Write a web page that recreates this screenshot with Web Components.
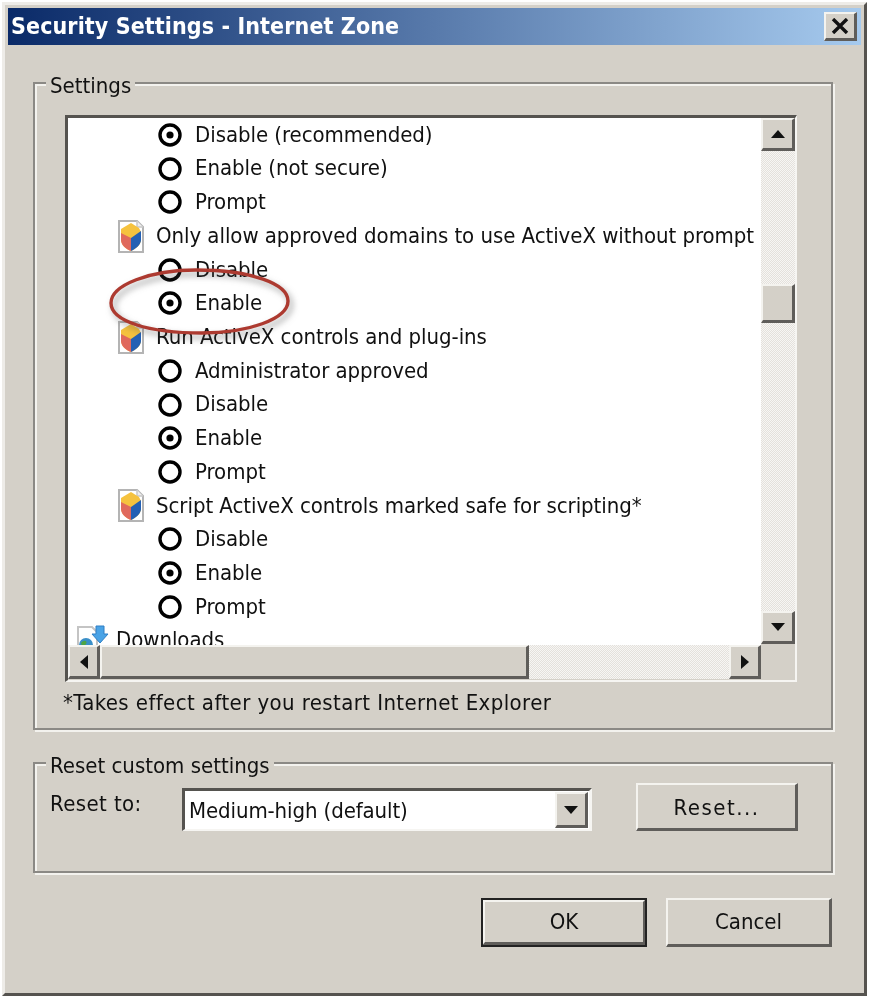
<!DOCTYPE html>
<html lang="en">
<head>
<meta charset="utf-8">
<title>Security Settings - Internet Zone</title>
<style>
html,body{margin:0;padding:0;background:#fff}
body{font:22px/1.2 "DejaVu Sans Condensed","DejaVu Sans",sans-serif;color:#111}
</style>
</head>
<body>
<x-window>
  <x-titlebar slot="title">Security Settings - Internet Zone</x-titlebar>

  <x-group label="Settings" style="--h:648px">
    <x-listbox>
      <x-opt checked>Disable (recommended)</x-opt>
      <x-opt>Enable (not secure)</x-opt>
      <x-opt>Prompt</x-opt>
      <x-head icon="shield">Only allow approved domains to use ActiveX without prompt</x-head>
      <x-opt>Disable</x-opt>
      <x-opt checked>Enable</x-opt>
      <x-head icon="shield">Run ActiveX controls and plug-ins</x-head>
      <x-opt>Administrator approved</x-opt>
      <x-opt>Disable</x-opt>
      <x-opt checked>Enable</x-opt>
      <x-opt>Prompt</x-opt>
      <x-head icon="shield">Script ActiveX controls marked safe for scripting*</x-head>
      <x-opt>Disable</x-opt>
      <x-opt checked>Enable</x-opt>
      <x-opt>Prompt</x-opt>
      <x-head icon="download">Downloads</x-head>
      <x-callout slot="over"></x-callout>
    </x-listbox>
    <x-note>*Takes effect after you restart Internet Explorer</x-note>
  </x-group>

  <x-group label="Reset custom settings" style="--h:111px;--mt:32px">
    <x-resetrow>
      <span slot="label">Reset to:</span>
      <x-combo slot="combo">Medium-high (default)</x-combo>
      <x-btn slot="button" style="--w:162px;--bh:48px;letter-spacing:1.5px;padding-top:3px">Reset...</x-btn>
    </x-resetrow>
  </x-group>

  <x-actions>
    <x-btn default style="--w:166px;--bh:49px">OK</x-btn>
    <x-btn style="--w:166px;--bh:49px">Cancel</x-btn>
  </x-actions>
</x-window>

<script>
function def(name, css, html){
  customElements.define(name, class extends HTMLElement{
    constructor(){
      super();
      const r=this.attachShadow({mode:'open'});
      r.innerHTML='<style>'+css+'</style>'+(typeof html==='function'?html(this):html);
    }
  });
}
const BEVEL='background:#d4d0c8;box-sizing:border-box;border-style:solid;border-width:2px 3px 3px 2px;border-color:#f4f3ef #5f5d5a #5f5d5a #f4f3ef;';
const DITHER='background-color:#efedea;background-image:conic-gradient(#e4e1dc 25%,#f7f6f4 0 50%,#e4e1dc 0 75%,#f7f6f4 0);background-size:2px 2px;';

def('x-window',`
  :host{display:block;width:869px;height:998px;box-sizing:border-box;filter:blur(.6px);
    padding:2px 2px 2px 2px}
  .frame{box-sizing:border-box;height:100%;background:#d4d0c8;
    border-style:solid;border-color:#eeece8 #55534f #55534f #eeece8;border-width:3px 3px 3px 3px;
    padding:3px 3px 0 3px;display:flex;flex-direction:column}
  .body{padding:0 0 0 25px;flex:1;display:flex;flex-direction:column}
`,`<div class="frame"><slot name="title"></slot><div class="body"><slot></slot></div></div>`);

def('x-titlebar',`
  :host{display:flex;align-items:center;justify-content:space-between;flex:none;height:37px;
    width:853px;box-sizing:border-box;padding:0 4px 0 3px;
    background:linear-gradient(90deg,#0a2a68,#a6caee);color:#fff;
    font:bold 23px/1 "DejaVu Sans Condensed","DejaVu Sans",sans-serif;letter-spacing:.1px}
  .x{width:33px;height:29px;display:flex;align-items:center;justify-content:center;${BEVEL}}
`,`<span><slot></slot></span><span class="x"><svg width="18" height="16" viewBox="0 0 18 16"><path d="M2 1 L16 15 M16 1 L2 15" stroke="#111" stroke-width="3.4" fill="none"/></svg></span>`);

def('x-group',`
  :host{display:block;box-sizing:border-box;width:800px;height:var(--h);margin:var(--mt,37px) 0 0 0;
    border:2px solid #8b8985;box-shadow:inset 2px 2px 0 #f3f2ee,2px 2px 0 #f3f2ee;position:relative}
  .lg{display:block;width:fit-content;margin:-10px 0 0 11px;padding:0 4px;background:#d4d0c8;height:24px;line-height:24px;white-space:nowrap}
`,h=>`<span class="lg">${h.getAttribute('label')}</span><slot></slot>`);

def('x-listbox',`
  :host{display:block;box-sizing:border-box;width:732px;height:567px;margin:17px 0 0 30px;
    border-style:solid;border-color:#55534f #f6f5f2 #f6f5f2 #55534f;border-width:3px 2px 2px 3px;background:#d4d0c8;position:relative;letter-spacing:-.05px}
  .g{display:grid;grid-template-columns:693px 34px;grid-template-rows:527px 35px;height:100%}
  .list{background:#fff;overflow:hidden;position:relative}
  .v,.h{display:flex}
  .v{flex-direction:column;height:526px}
  .h{height:34px}
  .btn{${BEVEL}flex:none;display:flex;align-items:center;justify-content:center}
  .v .btn{height:33px;width:34px}
  .h .btn{width:32px;height:34px}
  .track{${DITHER}flex:none}
  .v .track{width:34px}
  .h .track{height:34px}
  .corner{background:#d4d0c8}
`,`<div class="g">
    <div class="list"><div><slot></slot></div><slot name="over"></slot></div>
    <div class="v">
      <div class="btn"><svg width="14" height="8"><path d="M7 0 L14 8 H0Z" fill="#111"/></svg></div>
      <div class="track" style="height:133px"></div>
      <div class="btn" style="height:39px"></div>
      <div class="track" style="height:288px"></div>
      <div class="btn"><svg width="14" height="8"><path d="M0 0 H14 L7 8Z" fill="#111"/></svg></div>
    </div>
    <div class="h">
      <div class="btn"><svg width="8" height="14"><path d="M8 0 V14 L0 7Z" fill="#111"/></svg></div>
      <div class="btn" style="width:429px"></div>
      <div class="track" style="width:200px"></div>
      <div class="btn"><svg width="8" height="14"><path d="M0 0 L8 7 L0 14Z" fill="#111"/></svg></div>
    </div>
    <div class="corner"></div>
  </div>`);

def('x-opt',`
  :host{display:flex;align-items:center;height:33.73px;padding-left:90px;white-space:nowrap;gap:13px}
  svg{flex:none}
`,h=>`<svg width="24" height="24" viewBox="0 0 24 24"><circle cx="12" cy="12" r="10" fill="#fff" stroke="#000" stroke-width="3.4"/>${h.hasAttribute('checked')?'<circle cx="12" cy="12" r="3.6" fill="#000"/>':''}</svg><slot></slot>`);

const SHIELD=`<svg width="26" height="33" viewBox="0 0 26 33" style="flex:none">
  <path d="M1 1 H19 L25 7 V32 H1Z" fill="#fff" stroke="#b4b4b4" stroke-width="2"/>
  <path d="M19 1 V7 H25" fill="#eee" stroke="#c8c8c8" stroke-width="1.5"/>
  <path d="M13 3 L21 8 L23 12 V20 C23 25 17 29 13 31 C8 29 3 25 3 20 V9Z" fill="#f5c23e"/>
  <path d="M3 13 L13 18 V31 C8 29 3 25 3 20Z" fill="#e0695c"/>
  <path d="M13 18 L23 11 V20 C23 25 17 29 13 31Z" fill="#2460b4"/>
</svg>`;
const DL=`<svg width="34" height="34" viewBox="0 0 34 34" style="flex:none;margin-top:2px">
  <path d="M3 2 H17 L22 7 V32 H3Z" fill="#fff" stroke="#c4c4c4" stroke-width="2"/>
  <circle cx="11" cy="20" r="7" fill="#3a8fc8"/>
  <path d="M6 18 C9 14 13 16 11 19 C9 22 7 22 6 18Z M13 21 L17 20 L15 25Z" fill="#4ea544"/>
  <path d="M21 1 H29 V9 H33 L25 18 L17 9 H21Z" fill="#4aa3e6" stroke="#2f7fc4" stroke-width="1"/>
</svg>`;
def('x-head',`
  :host{display:flex;align-items:center;height:33.73px;white-space:nowrap;padding-left:50px;gap:12px}
  :host([icon=download]){padding-left:7px;gap:7px}
`,h=>(h.getAttribute('icon')==='download'?DL:SHIELD)+'<slot></slot>');

def('x-callout',`
  :host{display:block;position:absolute;left:34px;top:144px;width:204px;height:84px;pointer-events:none}
  svg{display:block;overflow:visible;filter:drop-shadow(3px 4px 3px rgba(70,70,70,.5))}
`,`<svg width="204" height="84" viewBox="0 0 204 84"><path d="M9 41 C9 23 48 8 94 8 C150 8 186 22 186 39 C186 57 146 71 100 71 C46 71 9 59 9 41Z" fill="none" stroke="#ad3a30" stroke-width="3.4"/></svg>`);

def('x-note',`
  :host{display:block;margin:9px 0 0 28px;height:24px;line-height:24px;white-space:nowrap;letter-spacing:.41px}
`,`<slot></slot>`);

def('x-resetrow',`
  :host{display:flex;align-items:flex-start;padding:10px 0 0 15px;position:relative}
  .lb{width:132px;flex:none;padding-top:4px;line-height:24px;letter-spacing:.4px}
  .sp{width:44px;flex:none}
  .btn{margin-top:-5px}
`,`<span class="lb"><slot name="label"></slot></span><slot name="combo"></slot><span class="sp"></span><span class="btn"><slot name="button"></slot></span>`);

def('x-combo',`
  :host{display:flex;box-sizing:border-box;width:410px;height:43px;background:#fff;
    border-style:solid;border-color:#55534f #f6f5f2 #f6f5f2 #55534f;border-width:3px 3px 2px 3px;align-items:center;justify-content:space-between}
  .t{padding:3px 0 0 4px;white-space:nowrap;letter-spacing:-.1px}
  .b{${BEVEL}width:33px;height:36px;margin-right:1px;display:flex;align-items:center;justify-content:center;flex:none}
`,`<span class="t"><slot></slot></span><span class="b"><svg width="14" height="8"><path d="M0 0 H14 L7 8Z" fill="#111"/></svg></span>`);

def('x-btn',`
  :host{display:flex;align-items:center;justify-content:center;box-sizing:border-box;width:var(--w);height:var(--bh);${BEVEL}}
  :host([default]){outline:2px solid #222;outline-offset:-2px;border-width:4px 4px 5px 4px}
`,`<slot></slot>`);

def('x-actions',`
  :host{display:flex;justify-content:flex-end;gap:19px;width:799px;margin-top:25px}
`,`<slot></slot>`);
</script>
</body>
</html>
